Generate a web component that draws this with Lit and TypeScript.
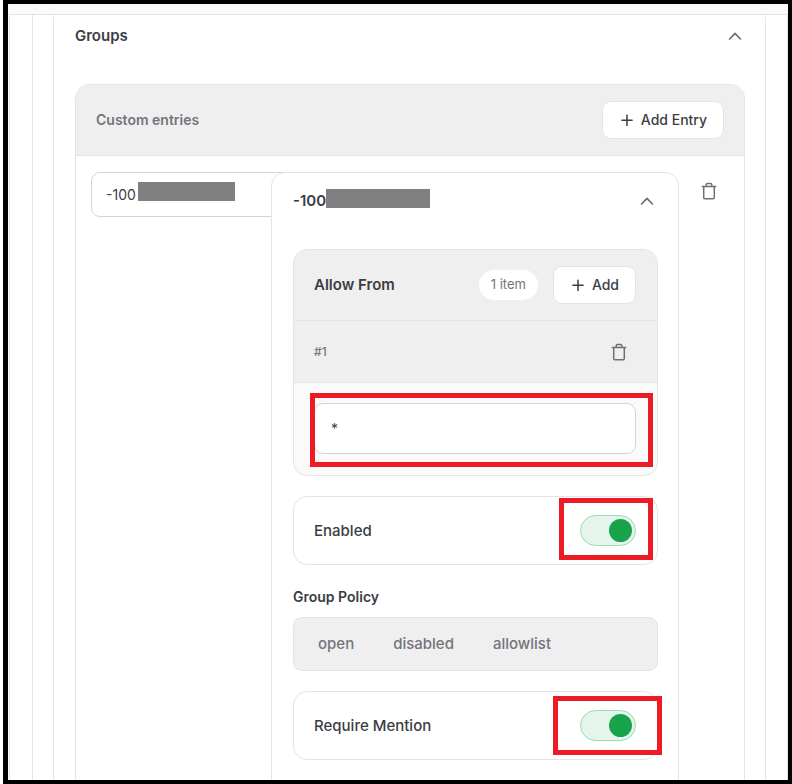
import { LitElement, html, css, svg } from "lit";
import { customElement, property } from "lit/decorators.js";

const chevron = html`<svg width="16" height="16" viewBox="0 0 16 16" fill="none" stroke="currentColor" stroke-width="1.700" stroke-linecap="round" stroke-linejoin="round" aria-hidden="true">${svg`<path d="M2.600 11 8 5.400l5.400 5.600"/>`}</svg>`;
const plus = html`<svg width="16" height="16" viewBox="0 0 16 16" fill="none" stroke="currentColor" stroke-width="1.500" stroke-linecap="round" aria-hidden="true">${svg`<path d="M8 3.200v10.200M2.900 8.300h10.200"/>`}</svg>`;
const trash = html`<svg width="18" height="20" viewBox="0 0 18 20" fill="none" stroke="currentColor" stroke-width="1.500" stroke-linecap="round" stroke-linejoin="round" aria-hidden="true">${svg`<path d="M2.300 5.500h13.400M3.700 5.500v11q0 1.300 1.300 1.300h8q1.300 0 1.300-1.300v-11M6.200 5.300v-1.600q0-1.200 1.200-1.200h3.200q1.200 0 1.200 1.200v1.600"/>`}</svg>`;

@customElement("setting-toggle")
export class SettingToggle extends LitElement {
  @property() label = "";

  static styles = css`
    :host { display: block; }
    .card {
      display: flex;
      align-items: center;
      justify-content: space-between;
      box-sizing: border-box;
      height: 69px;
      padding: 0 21px 0 20px;
      border: 1px solid #e4e4e7;
      border-radius: 14px;
      background: #fff;
      font-size: 15px;
      font-weight: 500;
      color: #3c3c43;
    }
    .control { position: relative; display: flex; }
    .switch {
      appearance: none;
      display: flex;
      align-items: center;
      justify-content: flex-end;
      box-sizing: border-box;
      width: 56px;
      height: 31px;
      margin: 0;
      padding: 3px;
      border: 1px solid #93e0b0;
      border-radius: 16px;
      background: #e6f5ec;
    }
    .switch:not(:checked) { justify-content: flex-start; }
    .switch::before {
      content: "";
      width: 23px;
      height: 23px;
      border-radius: 50%;
      background: #18a34a;
    }
  `;

  render() {
    return html`<label class="card">
      <span>${this.label}</span>
      <span class="control"><input class="switch" type="checkbox" role="switch" checked /><slot></slot></span>
    </label>`;
  }
}

@customElement("app-root")
export class AppRoot extends LitElement {
  static styles = css`
    :host {
      display: block;
      background: #fff;
      font-family: Inter, "Liberation Sans", sans-serif;
      font-size: 15px;
      line-height: 20px;
      color: #3c3c43;
    }
    * { box-sizing: border-box; }
    h2, h3, h4 { margin: 0; font-size: 15px; font-weight: 600; }
    button, input { font: inherit; color: inherit; }
    svg { display: block; flex: none; }
    .frame {
      height: 100vh;
      margin-left: 3px;
      padding: 10px 0 0 1px;
      overflow: hidden;
      border: solid #000;
      border-width: 4px 4px 4px 5px;
      background: #fafafa;
    }
    .outer {
      min-height: 100%;
      padding-left: 22px;
      border: solid #e4e4e7;
      border-width: 1px 0 0 1px;
      background: #fff;
      display: flex;
    }
    .middle {
      flex: 1;
      min-width: 0;
      display: flex;
      padding: 0 21px 0 20px;
      border: solid #e4e4e7;
      border-width: 0 1px;
    }
    .groups {
      flex: 1;
      min-width: 0;
      display: flex;
      flex-direction: column;
      padding: 0 20px 0 21px;
      border: solid #e4e4e7;
      border-width: 0 1px;
      border-radius: 4px 4px 0 0;
    }
    .head { display: flex; align-items: center; justify-content: space-between; }
    .groups > .head { height: 42px; margin-bottom: 27px; }
    .icon {
      display: grid;
      place-items: center;
      width: 36px;
      height: 38px;
      padding: 0;
      border: 0;
      background: none;
      color: #6f6f78;
    }
    .fold { width: 20px; }
    .entries {
      flex: 1;
      border: 1px solid #e4e4e7;
      border-radius: 14px 14px 0 0;
    }
    .bar {
      height: 71px;
      padding: 0 20px;
      border-bottom: 1px solid #e4e4e7;
      border-radius: 13px 13px 0 0;
      background: #efefef;
    }
    .list .bar { padding-right: 21px; }
    .bar .muted { font-size: 14px; color: #74747c; }
    .tools { display: flex; align-items: center; gap: 15px; }
    .add {
      display: flex;
      align-items: center;
      gap: 6px;
      height: 38px;
      padding: 0 16px;
      border: 1px solid #e4e4e7;
      border-radius: 9px;
      background: #fff;
      font-size: 14px;
      font-weight: 500;
    }
    .row {
      display: grid;
      grid-template-columns: 180px 1fr 36px;
      padding: 16px 17px 0 15px;
    }
    .key { position: relative; }
    .text {
      display: block;
      width: 100%;
      height: 51px;
      padding: 0 16px;
      border: 1px solid #d4d4d8;
      border-radius: 9px;
      background: #fff;
      font-size: 14px;
      outline: none;
    }
    .key .text { width: calc(100% + 20px); height: 45px; padding: 0 14px; }
    .redact { width: 104px; height: 19px; background: #808080; }
    .key .redact { position: absolute; left: 47px; top: 10px; width: 97px; }
    .panel {
      position: relative;
      margin-right: 12px;
      padding: 0 20px 40px 21px;
      border: 1px solid #e4e4e7;
      border-radius: 14px;
      background: #fff;
      display: flex;
      flex-direction: column;
      gap: 20px;
    }
    .panel > .head { height: 56px; padding-right: 1px; }
    .name { display: flex; align-items: center; }
    .name h3 { min-width: 33px; }
    .name .redact { margin-bottom: 6px; }
    .list {
      border: 1px solid #e4e4e7;
      border-radius: 14px;
      background: #fafafa;
    }
    .pill {
      height: 30px;
      padding: 0 12px;
      border-radius: 15px;
      background: #fff;
      font-size: 13px;
      line-height: 29px;
      color: #74747c;
    }
    .item {
      height: 62px;
      padding: 0 20px;
      border-bottom: 1px solid #e4e4e7;
      background: #efefef;
      font-size: 12px;
      font-weight: 500;
      color: #74747c;
    }
    .value { position: relative; margin: 20px 21px 21px 20px; }
    .mark {
      position: absolute;
      border: 5px solid #ed1c24;
      pointer-events: none;
    }
    .mark-value { inset: -10px -17px -13px -4px; }
    .mark-enabled { inset: -17px -17px -14px -21px; }
    .mark-mention { inset: -14px -26px -14px -27px; }
    .policy { min-width: 0; }
    .policy-label { margin-bottom: 8px; font-size: 14px; font-weight: 600; line-height: 24px; }
    .options {
      display: flex;
      gap: 1px;
      height: 54px;
      padding: 5px;
      border: 1px solid #e4e4e7;
      border-radius: 9px;
      background: #efefef;
    }
    .option {
      padding: 0 19px;
      border: 0;
      background: none;
      font-size: 15px;
      font-weight: 500;
      color: #74747c;
    }
  `;

  render() {
    return html`<main class="frame"><div class="outer"><div class="middle">
      <section class="groups">
        <div class="head">
          <h2>Groups</h2>
          <button class="icon fold" aria-label="Collapse groups">${chevron}</button>
        </div>
        <div class="entries">
          <div class="head bar">
            <h3 class="muted">Custom entries</h3>
            <button class="add">${plus}<span>Add Entry</span></button>
          </div>
          <div class="row">
            <div class="key">
              <input class="text" aria-label="Entry key" value="-100" />
              <span class="redact"></span>
            </div>
            <section class="panel">
              <div class="head">
                <div class="name"><h3>-100</h3><span class="redact"></span></div>
                <button class="icon fold" aria-label="Collapse entry">${chevron}</button>
              </div>
              <div class="list">
                <div class="head bar">
                  <h4>Allow From</h4>
                  <div class="tools">
                    <span class="pill">1 item</span>
                    <button class="add">${plus}<span>Add</span></button>
                  </div>
                </div>
                <div class="head item">
                  <span>#1</span>
                  <button class="icon" aria-label="Remove item">${trash}</button>
                </div>
                <div class="value">
                  <input class="text" aria-label="Item 1" value="*" />
                  <span class="mark mark-value"></span>
                </div>
              </div>
              <setting-toggle label="Enabled"><span class="mark mark-enabled"></span></setting-toggle>
              <div class="policy" role="group" aria-labelledby="policy">
                <div class="policy-label" id="policy">Group Policy</div>
                <div class="options">
                  ${["open", "disabled", "allowlist"].map((o) => html`<button class="option">${o}</button>`)}
                </div>
              </div>
              <setting-toggle label="Require Mention"><span class="mark mark-mention"></span></setting-toggle>
            </section>
            <button class="icon" aria-label="Remove entry">${trash}</button>
          </div>
        </div>
      </section>
    </div></div></main>`;
  }
}
